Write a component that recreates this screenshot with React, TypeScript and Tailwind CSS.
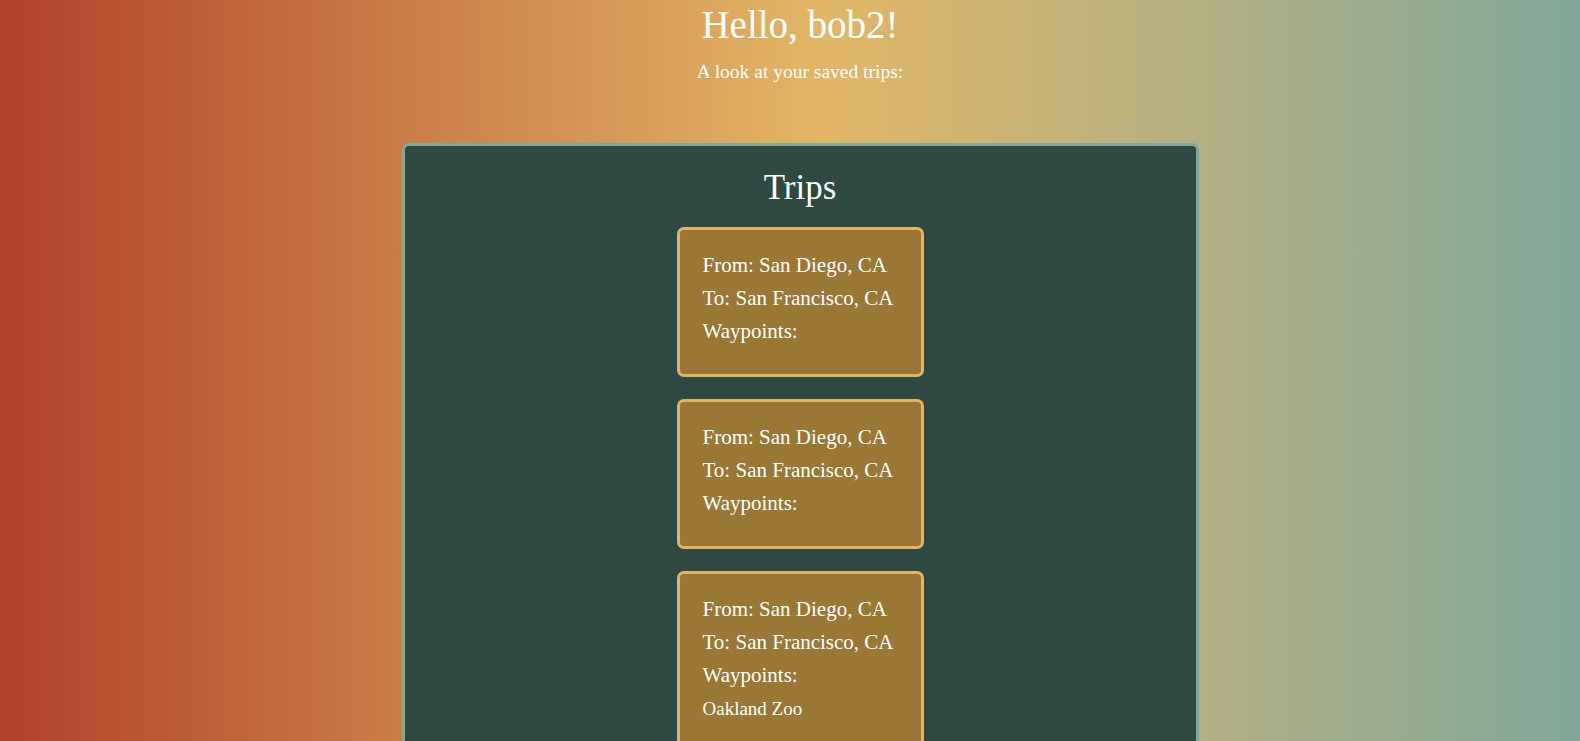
import React from "react";

type Trip = {
  from: string;
  to: string;
  waypoints: string[];
};

const trips: Trip[] = [
  { from: "San Diego, CA", to: "San Francisco, CA", waypoints: [] },
  { from: "San Diego, CA", to: "San Francisco, CA", waypoints: [] },
  { from: "San Diego, CA", to: "San Francisco, CA", waypoints: ["Oakland Zoo"] },
];

const TripCard = ({ trip }: { trip: Trip }) => {
  return (
    <li className="w-[247px] rounded-[7px] border-[3px] border-[#dfb664] bg-[#9b7735] pl-[23px] pr-3 pt-[19px] pb-[26px] text-[21px] leading-[33px] text-white">
      <p>From: {trip.from}</p>
      <p>To: {trip.to}</p>
      <p>Waypoints:</p>
      {trip.waypoints.map((w, i) => (
        <p key={`${w}-${i}`} className="text-[19px] leading-[33px]">
          {w}
        </p>
      ))}
    </li>
  );
};

export default function App() {
  return (
    <div
      className="min-h-screen overflow-hidden bg-[linear-gradient(90deg,#b2412a_0%,#c97c48_25%,#e2b666_52%,#bcb17e_72%,#7fa899_100%)] pl-[20px] text-white"
      style={{ fontFamily: '"Liberation Serif", "DejaVu Serif", serif' }}
    >
      <div className="flex flex-col items-center">
        <h1 className="pt-[3px] text-[39px] leading-[44px]">Hello, bob2!</h1>
        <p className="mt-[14px] text-[19.5px] leading-[22px]">A look at your saved trips:</p>

        <section className="mt-[60px] flex w-[797px] flex-col items-center rounded-[7px] border-[3px] border-[#7fa898] bg-[#2e4942] pb-10">
          <h2 className="mt-[22px] text-[35px] leading-[40px]">Trips</h2>
          <ul className="mt-[19px] flex flex-col items-center gap-[22px]">
            {trips.map((trip, i) => (
              <TripCard key={i} trip={trip} />
            ))}
          </ul>
        </section>
      </div>
    </div>
  );
}
